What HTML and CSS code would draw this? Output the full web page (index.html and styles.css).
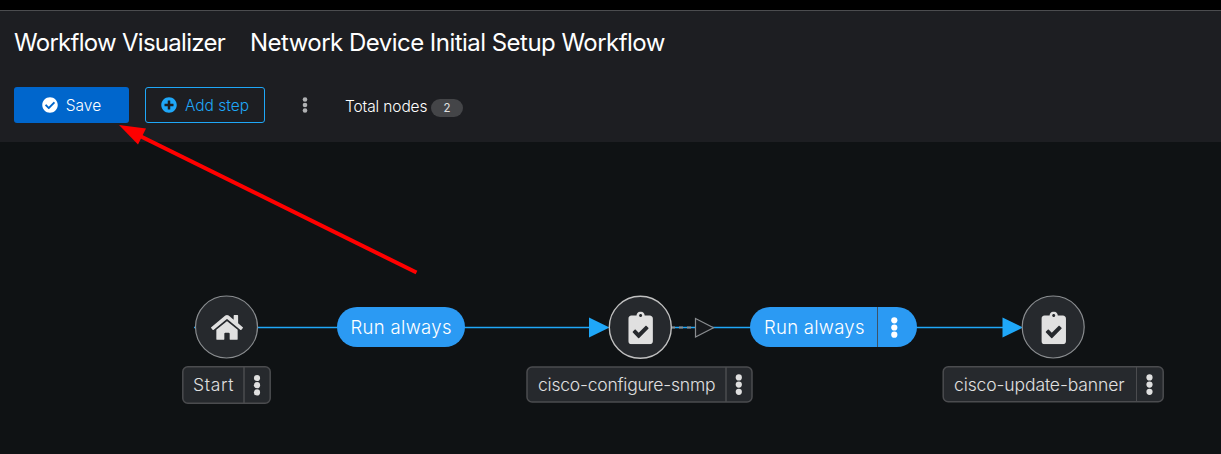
FILE: index.html
```html
<!DOCTYPE html>
<html lang="en">
<head>
<meta charset="utf-8">
<title>Workflow Visualizer</title>
<link rel="stylesheet" href="styles.css">
</head>
<body>
<div class="masthead"></div>
<header class="header">
  <div class="titles">
    <h1 class="title title-app">Workflow Visualizer</h1>
    <h2 class="title title-name">Network Device Initial Setup Workflow</h2>
  </div>
  <div class="toolbar">
    <button class="btn btn-primary">
      <svg class="icon" viewBox="0 0 512 512"><path d="M504 256c0 136.967-111.033 248-248 248S8 392.967 8 256 119.033 8 256 8s248 111.033 248 248zM227.314 387.314l184-184c6.248-6.248 6.248-16.379 0-22.627l-22.627-22.627c-6.248-6.249-16.379-6.249-22.628 0L216 308.118l-70.059-70.059c-6.248-6.248-16.379-6.248-22.628 0l-22.627 22.627c-6.248 6.248-6.248 16.379 0 22.627l104 104c6.249 6.249 16.379 6.249 22.628.001z"/></svg>
      <span class="save-text">Save</span>
    </button>
    <button class="btn btn-secondary">
      <svg class="icon" viewBox="0 0 512 512"><path d="M256 8C119 8 8 119 8 256s111 248 248 248 248-111 248-248S393 8 256 8zm144 276c0 6.600-5.400 12-12 12h-92v92c0 6.600-5.400 12-12 12h-56c-6.600 0-12-5.400-12-12v-92h-92c-6.600 0-12-5.400-12-12v-56c0-6.600 5.400-12 12-12h92v-92c0-6.600 5.400-12 12-12h56c6.600 0 12 5.400 12 12v92h92c6.600 0 12 5.400 12 12v56z"/></svg>
      <span class="add-text">Add step</span>
    </button>
    <button class="kebab" aria-label="Actions">
      <svg width="6" height="16" viewBox="0 0 6 16"><circle cx="3" cy="2.500" r="2.300"/><circle cx="3" cy="8" r="2.300"/><circle cx="3" cy="13.500" r="2.300"/></svg>
    </button>
    <div class="total"><span class="total-text">Total nodes</span><span class="badge">2</span></div>
  </div>
</header>
<main class="canvas">
  <svg class="graph" width="1221" height="312" viewBox="0 142 1221 312">
    <defs>
      <symbol id="clipboard" viewBox="0 0 384 512"><path d="M336 64h-80c0-35.300-28.700-64-64-64s-64 28.700-64 64H48C21.500 64 0 85.500 0 112v352c0 26.500 21.500 48 48 48h288c26.500 0 48-21.500 48-48V112c0-26.500-21.500-48-48-48zM192 40c13.300 0 24 10.700 24 24s-10.700 24-24 24-24-10.700-24-24 10.700-24 24-24zm121.200 231.800l-143 141.800c-4.700 4.700-12.300 4.600-17-.1l-82.600-83.300c-4.700-4.700-4.600-12.300.1-17L99.100 285c4.700-4.700 12.300-4.600 17 .1l46 46.400 106-105.200c4.700-4.700 12.300-4.600 17 .1l28.200 28.400c4.700 4.800 4.600 12.300-.1 17z"/></symbol>
      <g id="dots"><circle cy="-7.200" r="3.100"/><circle r="3.100"/><circle cy="7.200" r="3.100"/></g>
    </defs>

    <path class="edge" d="M194 327.500H590M671 327.500H1003"/>
    <path class="edge-dash" d="M671 327.500H694"/>
    <path class="arrow" d="M589 317.500L609.500 327.500L589 337.500ZM1002.500 317.500L1023 327.500L1002.500 337.500Z"/>
    <path class="arrow-open" d="M695.500 318.500L713.500 327.800L695.500 337Z"/>

    <g class="pill">
      <rect x="337" y="307" width="128" height="40" rx="20"/>
      <text x="350.500" y="334" textLength="101">Run always</text>
    </g>
    <g class="pill">
      <rect x="750" y="307" width="167" height="40" rx="20"/>
      <path class="pill-split" d="M877.500 307V347"/>
      <text x="764" y="334" textLength="100.500">Run always</text>
      <use href="#dots" x="894.300" y="327.500"/>
    </g>

    <g class="node">
      <circle class="disc" cx="226.500" cy="327" r="31"/>
      <svg x="211" y="313.200" width="32" height="28.440" viewBox="0 0 576 512"><path d="M280.370 148.260L96 300.110V464a16 16 0 0 0 16 16l112.060-.29a16 16 0 0 0 15.920-16V368a16 16 0 0 1 16-16h64a16 16 0 0 1 16 16v95.640a16 16 0 0 0 16 16.050L464 480a16 16 0 0 0 16-16V300L295.670 148.260a12.190 12.190 0 0 0-15.300 0zM571.600 251.470L488 182.560V44.050a12 12 0 0 0-12-12h-56a12 12 0 0 0-12 12v72.610L318.470 43a48 48 0 0 0-61 0L4.340 251.470a12 12 0 0 0-1.600 16.900l25.500 31A12 12 0 0 0 45.150 301l235.220-193.740a12.190 12.190 0 0 1 15.300 0L530.900 301a12 12 0 0 0 16.900-1.600l25.500-31a12 12 0 0 0-1.700-16.930z"/></svg>
      <rect class="label" x="182.800" y="366.800" width="87.400" height="36.400" rx="5"/>
      <path class="split" d="M244 367V403"/>
      <text x="193" y="391" textLength="40.500">Start</text>
      <use href="#dots" x="257" y="385.200"/>
    </g>

    <g class="node node-active">
      <circle class="disc" cx="640.300" cy="327.300" r="31"/>
      <use href="#clipboard" x="628.200" y="311.500" width="24.800" height="32.700"/>
      <rect class="label" x="527" y="367" width="225" height="35" rx="5"/>
      <path class="split" d="M726 367V402"/>
      <text x="538" y="391" textLength="177.500">cisco-configure-snmp</text>
      <use href="#dots" x="738.800" y="384.600"/>
    </g>

    <g class="node node-last">
      <circle class="disc" cx="1053.200" cy="327" r="31"/>
      <use href="#clipboard" x="1041.300" y="311.500" width="24.800" height="32.700"/>
      <rect class="label" x="943.200" y="366.800" width="220" height="35" rx="5"/>
      <path class="split" d="M1136.500 367V402"/>
      <text x="954" y="391" textLength="170.500">cisco-update-banner</text>
      <use href="#dots" x="1149.500" y="384.600"/>
    </g>
  </svg>
</main>
<svg class="pointer" width="320" height="170" viewBox="110 110 320 170"><path class="pointer-line" d="M416.500 272.500L138 135"/><path class="pointer-head" d="M119 125L146 128.500L138 144.500Z"/></svg>
</body>
</html>
```

FILE: styles.css
```css
* { box-sizing: border-box; }
body {
  margin: 0;
  height: 454px;
  overflow: hidden;
  display: flex;
  flex-direction: column;
  position: relative;
  background: #0f1214;
  color: #fff;
  font-family: Inter, "Open Sans", sans-serif;
}
.masthead { height: 10px; background: #000; }
.header {
  height: 132px;
  padding: 14px 14px 0;
  border-top: 1px solid #4b4c4f;
  background: #1d1e22;
}
.titles { display: flex; gap: 25px; height: 36px; align-items: center; }
.title { margin: 0; font-size: 24px; font-weight: 400; line-height: 36px; white-space: nowrap; }
.title-app { width: 211px; letter-spacing: -0.720px; }
.title-name { letter-spacing: -0.530px; }
.toolbar { display: flex; align-items: center; height: 36px; margin-top: 26px; }
.btn {
  display: flex;
  align-items: center;
  justify-content: center;
  gap: 8px;
  height: 36px;
  padding: 0;
  border: 0;
  border-radius: 3px;
  font: 300 15.500px Inter, sans-serif;
  white-space: nowrap;
}
.btn-primary { width: 115px; background: #06c; color: #fff; }
.btn-secondary { width: 120px; margin-left: 16px; background: none; border: 1px solid #1fa7f8; color: #1fa7f8; }
.icon { width: 16px; height: 16px; fill: currentColor; }
.kebab { display: flex; margin-left: 37px; padding: 0; border: 0; background: none; }
.kebab svg { fill: #b0b1b3; }
.total { display: flex; align-items: center; gap: 4px; margin: 3px 0 0 37px; font-size: 15.500px; font-weight: 300; white-space: nowrap; }
.total-text { width: 82px; letter-spacing: -0.120px; }
.badge {
  width: 32px;
  height: 18px;
  margin-top: 2px;
  border-radius: 9px;
  background: #444548;
  color: #e0e0e0;
  font-size: 11.500px;
  font-weight: 400;
  line-height: 18px;
  text-align: center;
}
.canvas { height: 312px; }
.graph { display: block; font-family: Inter, "Open Sans", sans-serif; }
.edge { stroke: #1fa7f8; stroke-width: 1.400; }
.edge-dash { stroke: #8a8d90; stroke-width: 2.200; stroke-dasharray: 4 4; }
.arrow { fill: #1fa7f8; }
.arrow-open { fill: #17191c; stroke: #8a8d90; stroke-width: 1.200; }
.pill { fill: #fff; font-size: 18.500px; font-weight: 300; }
.pill rect { fill: #2b9af3; }
.pill-split { stroke: #3d5367; stroke-width: 1; }
.node { fill: #e0e0e0; font-size: 17.500px; font-weight: 300; }
.disc { fill: #26292d; stroke: #8a8d90; stroke-width: 1.200; }
.node-active .disc { stroke: #c0c0c0; stroke-width: 1.400; }
.label { fill: #26292d; stroke: #4b4c4f; stroke-width: 1.500; }
.split { stroke: #4b4c4f; stroke-width: 1.500; }
.node-last .split { stroke-width: 1; }
.pointer { position: absolute; left: 110px; top: 110px; pointer-events: none; }
.pointer-line { stroke: #f00; stroke-width: 4; }
.pointer-head { fill: #f00; }
```
